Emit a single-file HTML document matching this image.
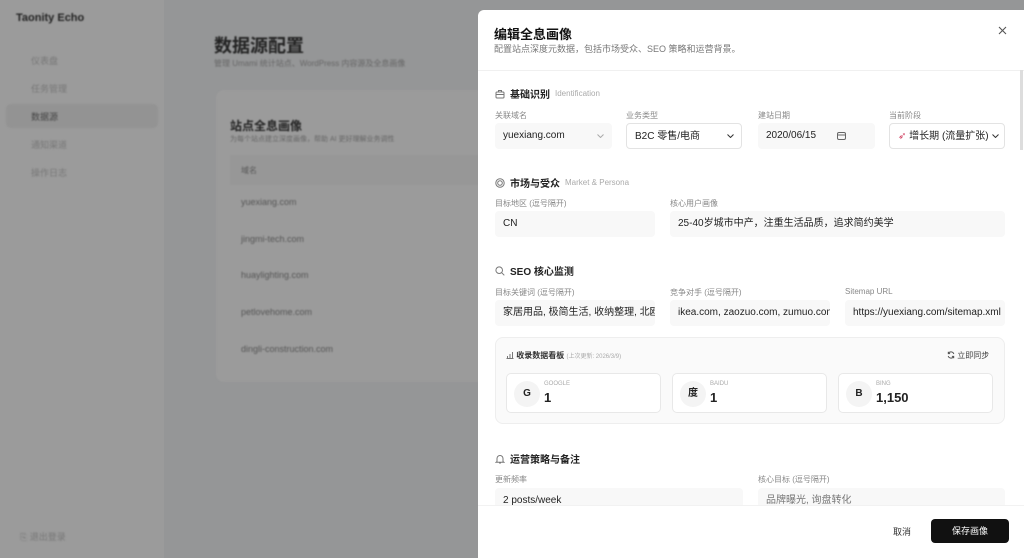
<!DOCTYPE html>
<html><head><meta charset="utf-8"><style>
*{box-sizing:border-box;margin:0;padding:0}
body{width:1024px;height:558px;overflow:hidden;position:relative;font-family:"Liberation Sans","Noto Sans CJK SC",sans-serif;background:#959697;color:#111}
.abs{position:absolute;white-space:nowrap}
.side{position:absolute;left:0;top:0;width:164px;height:558px;background:#9b9b9b}
.bg{filter:blur(0.8px)}
.modal{position:absolute;left:478px;top:10px;width:546px;height:548px;background:#fff;border-radius:6px 0 0 0;overflow:hidden}
.lbl{font-size:8px;color:#888}
.inp{position:absolute;height:26px;background:#f8f8f8;border-radius:4px;font-size:10px;color:#222;padding-left:8px;line-height:26px;white-space:nowrap;overflow:hidden}
.sel{background:#fff;border:1px solid #e3e3e3}
.sh{font-size:10px;font-weight:bold;color:#222;display:flex;align-items:center}
.sh svg{margin-right:5px}
.sh span{font-weight:normal;color:#aaa;font-size:8px;margin-left:5px}
.card{position:absolute;top:373px;width:155px;height:40px;background:#fff;border:1px solid #e8e8e8;border-radius:5px}
.circ{position:absolute;left:7px;top:7px;width:26px;height:26px;border-radius:50%;background:#f4f4f4;font-size:10px;font-weight:bold;text-align:center;line-height:26px;color:#222}
.cl{position:absolute;left:37px;top:7px;font-size:6px;color:#aaa}
.cv{position:absolute;left:37px;top:16px;font-size:13px;font-weight:bold;color:#222}
</style></head><body>
<div class="side"></div>
<div class="bg">
<div class="abs" style="left:16px;top:12px;font-size:11px;font-weight:bold;color:#222">Taonity Echo</div>
<div class="abs" style="left:31px;top:54px;font-size:9px;color:#777">仪表盘</div>
<div class="abs" style="left:31px;top:82px;font-size:9px;color:#777">任务管理</div>
<div class="abs" style="left:6px;top:104px;width:152px;height:24px;background:#939393;border-radius:5px"></div>
<div class="abs" style="left:31px;top:110px;font-size:9px;color:#444">数据源</div>
<div class="abs" style="left:31px;top:138px;font-size:9px;color:#777">通知渠道</div>
<div class="abs" style="left:31px;top:166px;font-size:9px;color:#777">操作日志</div>
<div class="abs" style="left:20px;top:530px;font-size:9px;color:#777">⎘ 退出登录</div>
<div class="abs" style="left:214px;top:32px;font-size:18px;font-weight:bold;color:#222">数据源配置</div>
<div class="abs" style="left:214px;top:58px;font-size:8px;color:#666">管理 Umami 统计站点、WordPress 内容源及全息画像</div>
<div class="abs" style="left:216px;top:90px;width:270px;height:292px;background:#9b9b9b;border-radius:8px"></div>
<div class="abs" style="left:230px;top:117px;font-size:12px;font-weight:bold;color:#222">站点全息画像</div>
<div class="abs" style="left:230px;top:134px;font-size:7px;color:#666">为每个站点建立深度画像，帮助 AI 更好理解业务调性</div>
<div class="abs" style="left:230px;top:155px;width:256px;height:30px;background:#979797"></div>
<div class="abs" style="left:241px;top:165px;font-size:8px;color:#555">域名</div>
<div class="abs" style="left:241px;top:197px;font-size:9px;color:#555">yuexiang.com</div>
<div class="abs" style="left:241px;top:234px;font-size:9px;color:#555">jingmi-tech.com</div>
<div class="abs" style="left:241px;top:270px;font-size:9px;color:#555">huaylighting.com</div>
<div class="abs" style="left:241px;top:307px;font-size:9px;color:#555">petlovehome.com</div>
<div class="abs" style="left:241px;top:344px;font-size:9px;color:#555">dingli-construction.com</div>
</div>

<div class="modal">
<div class="abs" style="left:16px;top:14px;font-size:13px;font-weight:bold;color:#111">编辑全息画像</div>
<div class="abs" style="left:16px;top:32px;font-size:9px;color:#777">配置站点深度元数据，包括市场受众、SEO 策略和运营背景。</div>
<svg class="abs" style="left:520px;top:16px" width="9" height="9" viewBox="0 0 9 9"><path d="M1 1L8 8M8 1L1 8" stroke="#555" stroke-width="1.1"/></svg>
<div class="abs" style="left:0;top:60px;width:546px;height:1px;background:#f0f0f0"></div>
<div class="abs" style="left:542px;top:60px;width:3px;height:80px;background:#ddd"></div>
</div>

<div class="abs sh" style="left:495px;top:86px"><svg width="10" height="10" viewBox="0 0 10 10"><rect x="1" y="3" width="8" height="6" rx="1" fill="none" stroke="#777"/><path d="M3.5 3V1.5h3V3M1 5.5h8" fill="none" stroke="#777"/></svg>基础识别<span>Identification</span></div>
<div class="abs lbl" style="left:495px;top:110px">关联域名</div>
<div class="abs lbl" style="left:626px;top:110px">业务类型</div>
<div class="abs lbl" style="left:758px;top:110px">建站日期</div>
<div class="abs lbl" style="left:889px;top:110px">当前阶段</div>
<div class="inp" style="left:495px;top:123px;width:117px">yuexiang.com<svg style="position:absolute;right:8px;top:11px" width="7" height="4" viewBox="0 0 7 4"><path d="M.5.5L3.5 3.5 6.5.5" fill="none" stroke="#aaa"/></svg></div>
<div class="inp sel" style="left:626px;top:123px;width:116px">B2C 零售/电商<svg style="position:absolute;right:7px;top:10px" width="7" height="4" viewBox="0 0 7 4"><path d="M.5.5L3.5 3.5 6.5.5" fill="none" stroke="#333"/></svg></div>
<div class="inp" style="left:758px;top:123px;width:117px">2020/06/15<svg style="position:absolute;left:79px;top:8px" width="9" height="9" viewBox="0 0 9 9"><rect x=".5" y="1.5" width="8" height="7" rx="1.5" fill="none" stroke="#666"/><path d="M.5 4h8" stroke="#666"/></svg></div>
<div class="inp sel" style="left:889px;top:123px;width:116px"><span style="color:#d04060">➶</span> 增长期 (流量扩张)<svg style="position:absolute;right:5px;top:10px" width="7" height="4" viewBox="0 0 7 4"><path d="M.5.5L3.5 3.5 6.5.5" fill="none" stroke="#333"/></svg></div>

<div class="abs sh" style="left:495px;top:175px"><svg width="10" height="10" viewBox="0 0 10 10"><circle cx="5" cy="5" r="4.2" fill="none" stroke="#777"/><circle cx="5" cy="5" r="2.3" fill="none" stroke="#777"/></svg>市场与受众<span>Market &amp; Persona</span></div>
<div class="abs lbl" style="left:495px;top:198px">目标地区 (逗号隔开)</div>
<div class="abs lbl" style="left:670px;top:198px">核心用户画像</div>
<div class="inp" style="left:495px;top:211px;width:160px">CN</div>
<div class="inp" style="left:670px;top:211px;width:335px">25-40岁城市中产，注重生活品质，追求简约美学</div>

<div class="abs sh" style="left:495px;top:263px"><svg width="10" height="10" viewBox="0 0 10 10"><circle cx="4.2" cy="4.2" r="3.3" fill="none" stroke="#777"/><path d="M6.7 6.7L9.3 9.3" stroke="#777"/></svg>SEO 核心监测</div>
<div class="abs lbl" style="left:495px;top:287px">目标关键词 (逗号隔开)</div>
<div class="abs lbl" style="left:670px;top:287px">竞争对手 (逗号隔开)</div>
<div class="abs lbl" style="left:845px;top:287px">Sitemap URL</div>
<div class="inp" style="left:495px;top:300px;width:160px;padding-right:6px">家居用品, 极简生活, 收纳整理, 北欧风</div>
<div class="inp" style="left:670px;top:300px;width:160px;padding-right:6px">ikea.com, zaozuo.com, zumuo.com</div>
<div class="inp" style="left:845px;top:300px;width:160px;padding-right:6px">https://yuexiang.com/sitemap.xml</div>

<div class="abs" style="left:495px;top:337px;width:510px;height:87px;background:#fafafa;border:1px solid #eee;border-radius:8px"></div>
<div class="abs" style="left:506px;top:350px;font-size:8px;font-weight:bold;color:#333"><svg width="8" height="8" viewBox="0 0 8 8" style="vertical-align:-1px"><path d="M.5 7.5h7M1.5 7V5M4 7V3M6.5 7V1" stroke="#777"/></svg> 收录数据看板 <span style="font-weight:normal;color:#aaa;font-size:6px">(上次更新: 2026/3/9)</span></div>
<div class="abs" style="left:947px;top:350px;font-size:8px;color:#444"><svg width="8" height="8" viewBox="0 0 8 8" style="vertical-align:-1px"><path d="M6.8 3A3 3 0 0 0 1.3 2.5M1.2 5a3 3 0 0 0 5.5.5M1.3 .8v1.8h1.8M6.7 7.2V5.4H4.9" fill="none" stroke="#555"/></svg> 立即同步</div>
<div class="card" style="left:506px"><div class="circ">G</div><div class="cl">GOOGLE</div><div class="cv">1</div></div>
<div class="card" style="left:672px"><div class="circ">度</div><div class="cl">BAIDU</div><div class="cv">1</div></div>
<div class="card" style="left:838px"><div class="circ">B</div><div class="cl">BING</div><div class="cv">1,150</div></div>

<div class="abs sh" style="left:495px;top:451px"><svg width="10" height="10" viewBox="0 0 10 10"><path d="M2 7.5V4.5a3 3 0 0 1 6 0v3l1 .8H1z M4 9h2" fill="none" stroke="#777"/></svg>运营策略与备注</div>
<div class="abs lbl" style="left:495px;top:474px">更新频率</div>
<div class="abs lbl" style="left:758px;top:474px">核心目标 (逗号隔开)</div>
<div class="inp" style="left:495px;top:488px;width:248px">2 posts/week</div>
<div class="inp" style="left:758px;top:488px;width:247px;color:#777">品牌曝光, 询盘转化</div>

<div class="abs" style="left:478px;top:505px;width:546px;height:53px;background:#fff;border-top:1px solid #f2f2f2"></div>
<div class="abs" style="left:893px;top:525px;font-size:9px;color:#333">取消</div>
<div class="abs" style="left:931px;top:519px;width:78px;height:24px;background:#111;border-radius:4px;color:#fff;font-size:9px;text-align:center;line-height:24px">保存画像</div>
</body></html>
